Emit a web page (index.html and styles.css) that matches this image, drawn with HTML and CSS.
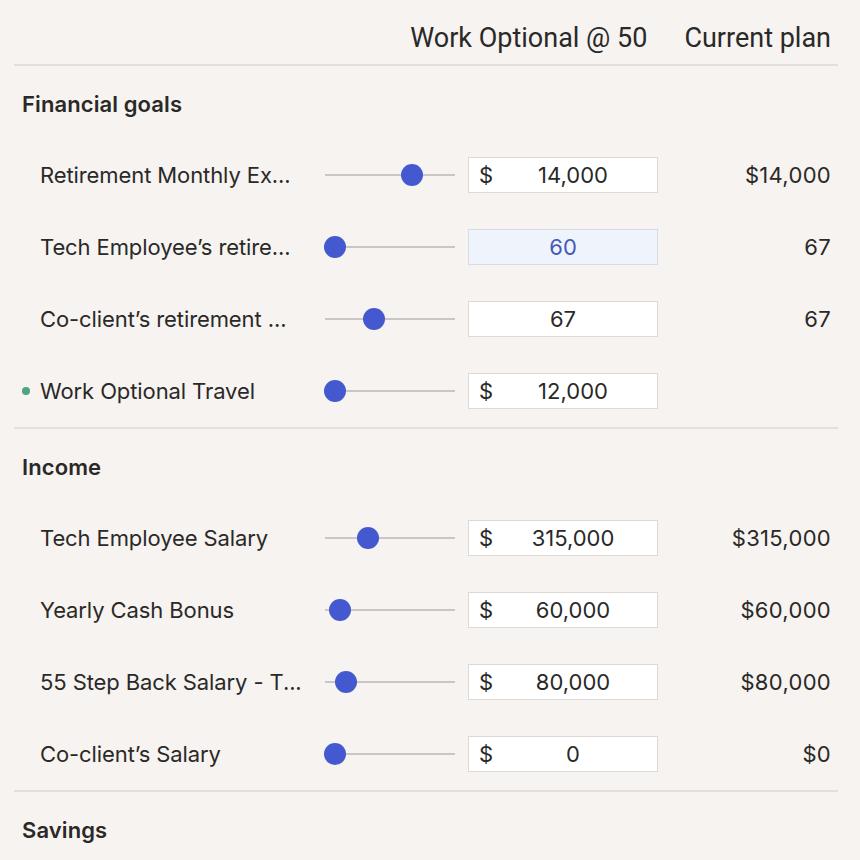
FILE: index.html
```html
<!DOCTYPE html>
<html>
<head>
<meta charset="utf-8">
<link rel="stylesheet" href="styles.css">
</head>
<body>
<div class="panel">
  <div class="header">
    <div class="hcol scenario">Work Optional @ 50</div>
    <div class="hcol current">Current plan</div>
  </div>

  <section class="section">
    <h2 class="section-title">Financial goals</h2>
    <div class="row">
      <span class="dot"></span>
      <span class="label">Retirement Monthly Ex...</span>
      <div class="slider"><span class="thumb" style="left:87px"></span></div>
      <div class="field"><span class="cur">$</span><span class="val">14,000</span></div>
      <span class="plan">$14,000</span>
    </div>
    <div class="row">
      <span class="dot"></span>
      <span class="label">Tech Employee’s retire...</span>
      <div class="slider"><span class="thumb" style="left:10px"></span></div>
      <div class="field active"><span class="val center">60</span></div>
      <span class="plan">67</span>
    </div>
    <div class="row">
      <span class="dot"></span>
      <span class="label">Co-client’s retirement ...</span>
      <div class="slider"><span class="thumb" style="left:49px"></span></div>
      <div class="field"><span class="val center">67</span></div>
      <span class="plan">67</span>
    </div>
    <div class="row">
      <span class="dot on"></span>
      <span class="label">Work Optional Travel</span>
      <div class="slider"><span class="thumb" style="left:10px"></span></div>
      <div class="field"><span class="cur">$</span><span class="val">12,000</span></div>
      <span class="plan"></span>
    </div>
  </section>

  <section class="section">
    <h2 class="section-title">Income</h2>
    <div class="row">
      <span class="dot"></span>
      <span class="label">Tech Employee Salary</span>
      <div class="slider"><span class="thumb" style="left:43px"></span></div>
      <div class="field"><span class="cur">$</span><span class="val">315,000</span></div>
      <span class="plan">$315,000</span>
    </div>
    <div class="row">
      <span class="dot"></span>
      <span class="label">Yearly Cash Bonus</span>
      <div class="slider"><span class="thumb" style="left:15px"></span></div>
      <div class="field"><span class="cur">$</span><span class="val">60,000</span></div>
      <span class="plan">$60,000</span>
    </div>
    <div class="row">
      <span class="dot"></span>
      <span class="label">55 Step Back Salary - T...</span>
      <div class="slider"><span class="thumb" style="left:21px"></span></div>
      <div class="field"><span class="cur">$</span><span class="val">80,000</span></div>
      <span class="plan">$80,000</span>
    </div>
    <div class="row">
      <span class="dot"></span>
      <span class="label">Co-client’s Salary</span>
      <div class="slider"><span class="thumb" style="left:10px"></span></div>
      <div class="field"><span class="cur">$</span><span class="val">0</span></div>
      <span class="plan">$0</span>
    </div>
  </section>

  <section class="section last">
    <h2 class="section-title">Savings</h2>
  </section>
</div>
</body>
</html>
```

FILE: styles.css
```css
html, body {
  margin: 0;
  padding: 0;
  background: #f6f3f0;
}
body {
  font-family: Inter, "Noto Sans", sans-serif;
  color: #2b2a29;
}
.panel {
  width: 824px;
  margin-left: 14px;
}
.header {
  display: flex;
  justify-content: flex-end;
  align-items: center;
  height: 66px;
  padding-right: 7px;
  padding-top: 11px;
  border-bottom: 2px solid #e2dfdc;
  box-sizing: border-box;
  font-family: Roboto, "Noto Sans", sans-serif;
  font-size: 27px;
  color: #2a2928;
}
.hcol.scenario { margin-right: 37px; }
.section {
  border-bottom: 2px solid #e2dfdc;
}
.section.last { border-bottom: none; }
.section-title {
  margin: 0;
  padding: 26px 0 0 8px;
  height: 72px;
  line-height: 24px;
  box-sizing: border-box;
  font-size: 22px;
  font-weight: 600;
  letter-spacing: 0.1px;
  color: #2a2928;
}
.row {
  display: grid;
  grid-template-columns: 18px 285px 130px 13px 190px 1fr;
  align-items: center;
  height: 72px;
  padding-left: 8px;
  padding-right: 7px;
}
.row:first-of-type { margin-top: 1px; }
.dot {
  grid-column: 1;
  width: 8px;
  height: 8px;
  border-radius: 50%;
  margin-left: 0;
}
.dot.on { background: #4da383; }
.label {
  grid-column: 2;
  font-size: 22px;
  letter-spacing: -0.1px;
  color: #2a2928;
  white-space: nowrap;
}
.slider {
  grid-column: 3;
  position: relative;
  height: 2px;
  background: #c9c6c3;
}
.thumb {
  position: absolute;
  top: 50%;
  width: 22px;
  height: 22px;
  margin: -11px 0 0 -11px;
  border-radius: 50%;
  background: #4459cf;
}
.field {
  grid-column: 5;
  height: 36px;
  box-sizing: border-box;
  border: 1px solid #dcd9d6;
  background: #ffffff;
  display: flex;
  align-items: center;
  padding: 0 10px;
  font-size: 22px;
  color: #2a2928;
}
.field.active {
  background: #eef3fc;
  border-color: #d6dbe4;
  color: #4459b8;
}
.cur {
  width: 20px;
}
.val {
  flex: 1;
  text-align: center;
}
.plan {
  grid-column: 6;
  text-align: right;
  font-size: 22px;
  letter-spacing: 0.3px;
  color: #2a2928;
}
```
